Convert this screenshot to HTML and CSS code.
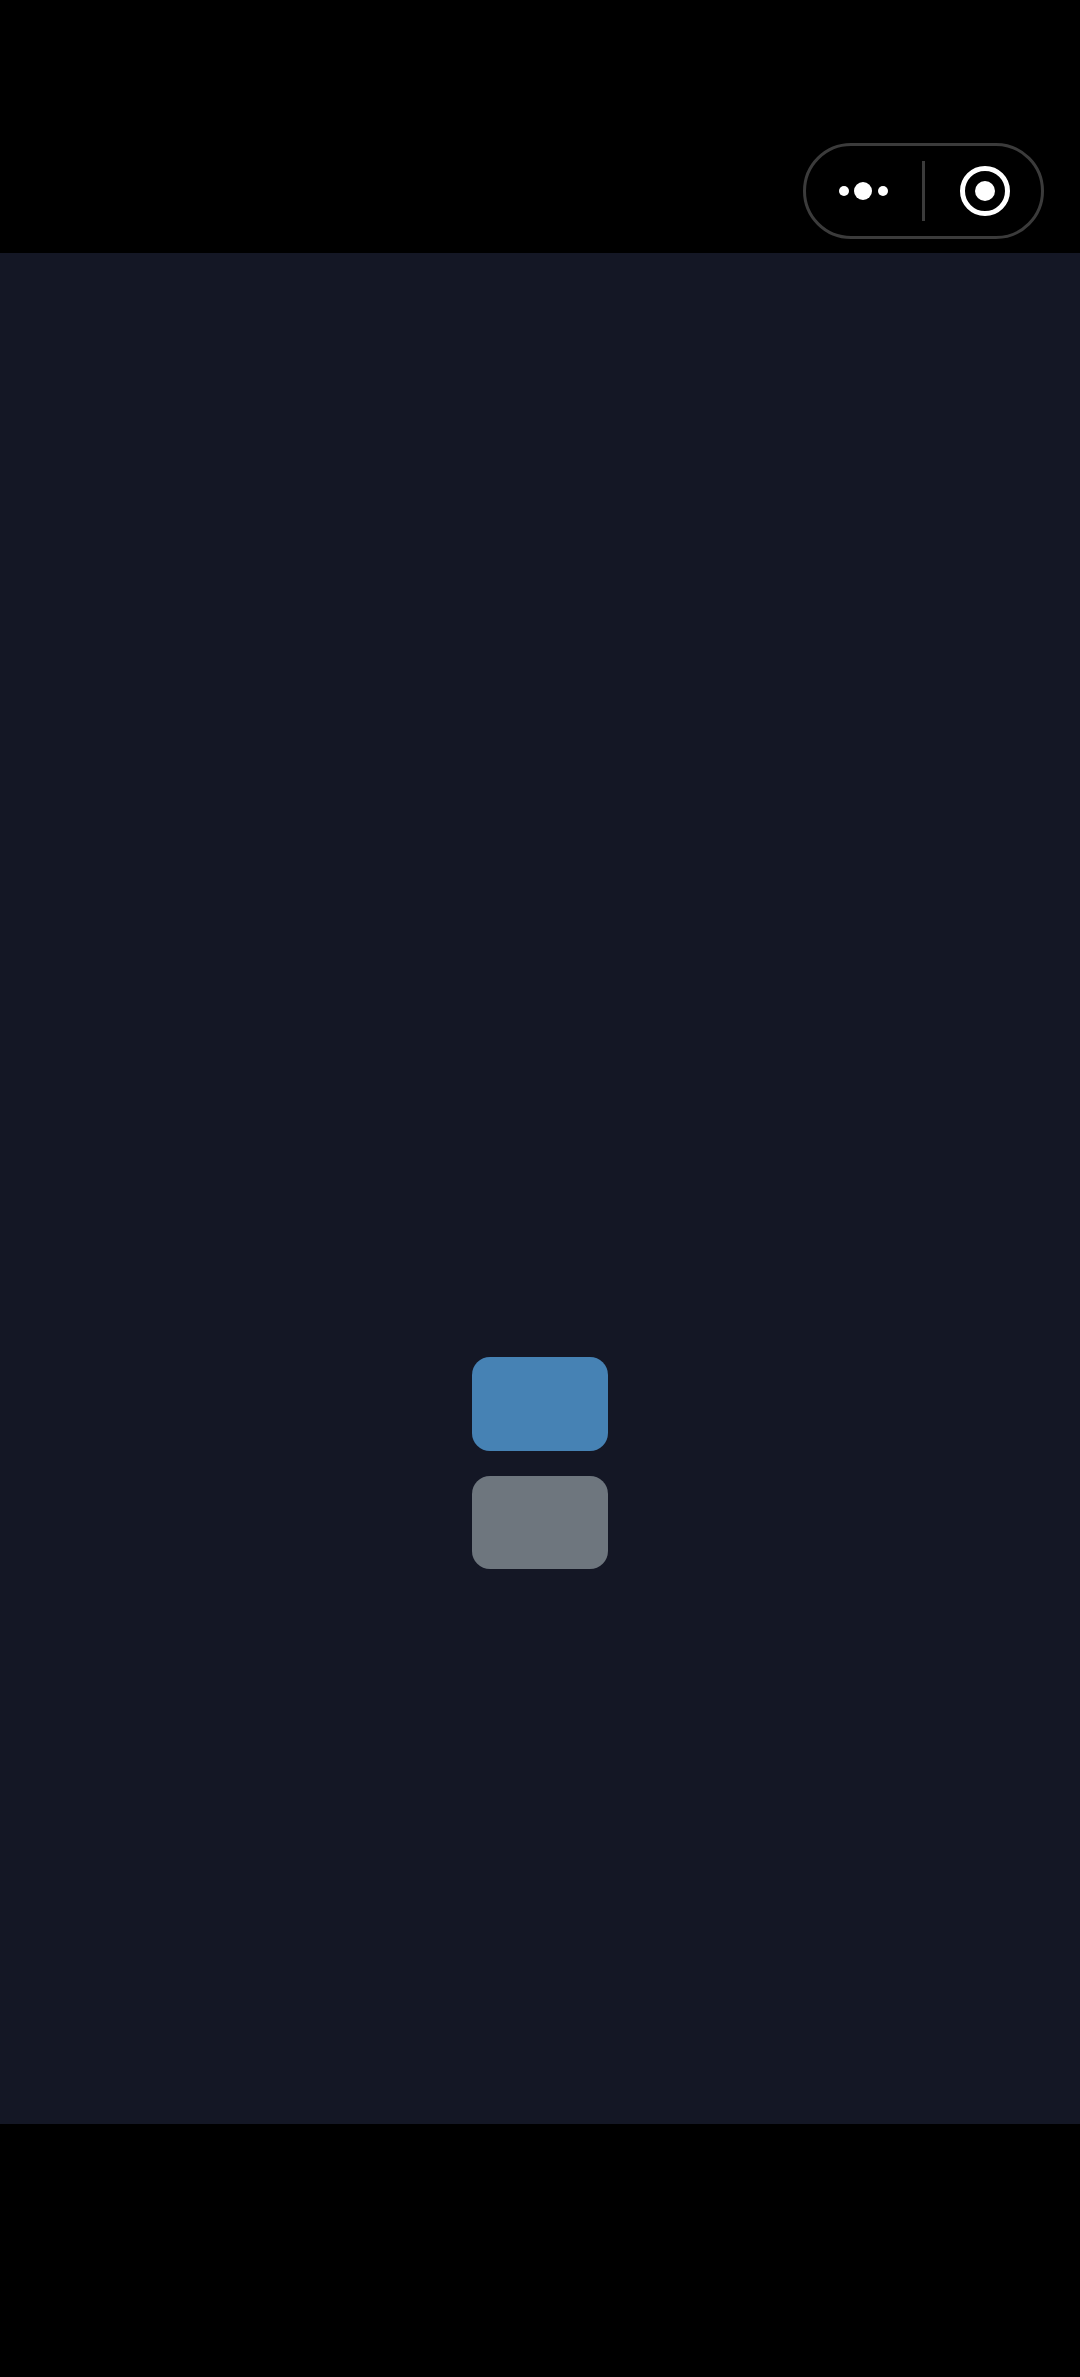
FILE: index.html
```html
<!DOCTYPE html>
<html lang="zh-Hans">
<head>
	<meta charset="UTF-8">
	<title>page</title>
	<link rel="stylesheet" href="styles.css">
</head>
<body>

	<div class="nav-bar">
		<div class="capsule">
			<div class="capsule-more">
				<span class="dot"></span>
				<span class="dot big"></span>
				<span class="dot"></span>
			</div>
			<div class="capsule-line"></div>
			<div class="capsule-close">
				<span class="close-ring"><span class="close-core"></span></span>
			</div>
		</div>
	</div>

	<div class="content">
		<button class="btn blue" type="button"></button>
		<button class="btn gray" type="button"></button>
	</div>

</body>
</html>
```

FILE: styles.css
```css
*{
	margin: 0;
	padding: 0;
	box-sizing: border-box;
}
html, body{
	height: 100%;
	background-color: #000;
	overflow: hidden;
}
.nav-bar{
	height: 253px;
	padding: 143px 36px 0 0;
	display: flex;
	justify-content: flex-end;
}
.capsule{
	width: 241px;
	height: 96px;
	border: 3px solid #3b3b3b;
	border-radius: 48px;
	display: flex;
	align-items: center;
}
.capsule-more{
	width: 116px;
	display: flex;
	justify-content: center;
	align-items: center;
	gap: 5.5px;
	padding-right: 2px;
}
.dot{
	width: 10px;
	height: 10px;
	border-radius: 50%;
	background-color: #fff;
}
.dot.big{
	width: 18px;
	height: 18px;
}
.capsule-line{
	width: 3px;
	height: 60px;
	background-color: #3b3b3b;
}
.capsule-close{
	flex: 1;
	padding-left: 4px;
	display: flex;
	justify-content: center;
	align-items: center;
}
.close-ring{
	width: 50px;
	height: 50px;
	border: 5px solid #fff;
	border-radius: 50%;
	display: flex;
	justify-content: center;
	align-items: center;
}
.close-core{
	width: 20px;
	height: 20px;
	border-radius: 50%;
	background-color: #fff;
}
.content{
	height: 1871px;
	padding-top: 1104px;
	background-color: #141725;
	display: flex;
	flex-direction: column;
	align-items: center;
	gap: 25px;
}
.btn{
	width: 136px;
	height: 93.5px;
	border: 0;
	border-radius: 18px;
}
.btn.blue{
	background-color: #4682b4;
}
.btn.gray{
	background-color: #6e767e;
}
```
